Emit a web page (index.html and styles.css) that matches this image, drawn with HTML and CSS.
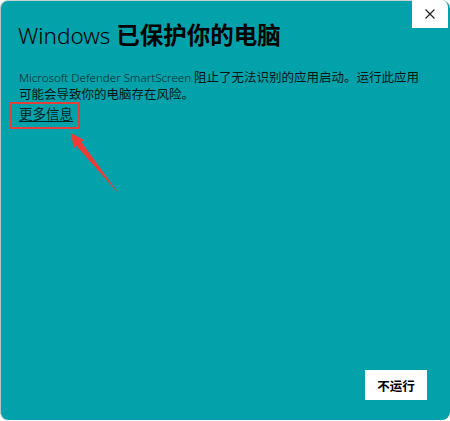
FILE: index.html
```html
<!DOCTYPE html>
<html lang="zh-CN">
<head>
<meta charset="utf-8">
<title>Windows 已保护你的电脑</title>
<link rel="stylesheet" href="styles.css">
</head>
<body>
<div class="window">
  <div class="titlebar">
    <button class="close" aria-label="关闭">
      <svg width="10" height="10" viewBox="0 0 10 10"><path d="M0.5 0.5 L9.5 9.5 M9.5 0.5 L0.5 9.5" stroke="#1a1a1a" stroke-width="1.1" fill="none"/></svg>
    </button>
  </div>
  <div class="content">
    <h1 class="title"><span class="latin">Windows</span> <span class="cjk">已保护你的电脑</span></h1>
    <p class="desc"><span class="product">Microsoft Defender SmartScreen</span> 阻止了无法识别的应用启动。运行此应用可能会导致你的电脑存在风险。</p>
    <div class="more-wrap"><a class="more" href="#">更多信息</a></div>
  </div>
  <div class="footer">
    <button class="btn">不运行</button>
  </div>
  <svg class="arrow" width="64" height="74" viewBox="0 0 64 74">
    <polygon points="11,8 24,15 21.3,17 59,69 16,20.5 13.8,23.5" fill="#ef3b36"/>
  </svg>
</div>
</body>
</html>
```
FILE: styles.css
```css
html, body {
  margin: 0;
  padding: 0;
  background: #ffffff;
}
body {
  width: 450px;
  height: 421px;
  overflow: hidden;
  font-family: "Noto Sans", "Noto Sans CJK SC", sans-serif;
}
.window {
  position: relative;
  box-sizing: border-box;
  width: 450px;
  height: 420px;
  background: #03a1a9;
  border-left: 1px solid #b9c4c5;
  border-top: 1px solid #c9d3d4;
  border-radius: 8px;
  display: flex;
  flex-direction: column;
  color: #000;
}
.titlebar {
  height: 0;
  position: relative;
}
.close {
  position: absolute;
  top: -1px;
  right: 2px;
  width: 36px;
  height: 28px;
  background: #ffffff;
  border: none;
  border-top-right-radius: 7px;
  padding: 0;
  display: flex;
  align-items: center;
  justify-content: center;
}
.content {
  padding: 17px 0 0 17px;
  flex: 1;
}
.title {
  margin: 0;
  font-size: 22.5px;
  line-height: 32px;
  font-weight: normal;
  white-space: nowrap;
}
.title .latin {
  font-family: "Noto Sans", sans-serif;
  font-weight: 300;
}
.title .cjk {
  font-family: "Noto Sans CJK SC", sans-serif;
  font-size: 23.5px;
  font-weight: 700;
}
.desc {
  margin: 17px 0 0 1px;
  width: 406px;
  font-size: 12.5px;
  line-height: 16px;
  font-family: "Noto Sans CJK SC", sans-serif;
  color: #031617;
}
.product {
  font-family: "Noto Sans", sans-serif;
  font-size: 11.6px;
  font-weight: 300;
  color: #072a2c;
}
.more-wrap {
  display: inline-block;
  margin: 0 0 0 -8px;
  padding: 1px 5px 5px 7px;
  border: 2px solid #e2403c;
}
.more {
  display: block;
  font-family: "Noto Sans CJK SC", sans-serif;
  font-size: 13.5px;
  line-height: 17px;
  color: #062526;
  text-decoration: underline;
  text-underline-offset: 2px;
}
.footer {
  display: flex;
  justify-content: flex-end;
  padding: 0 23px 20px 0;
}
.btn {
  width: 62px;
  height: 30px;
  background: #ffffff;
  border: none;
  font-family: "Noto Sans CJK SC", sans-serif;
  font-size: 12.5px;
  font-weight: 700;
  color: #000;
  padding: 0;
}
.arrow {
  position: absolute;
  left: 59px;
  top: 124px;
}
```
